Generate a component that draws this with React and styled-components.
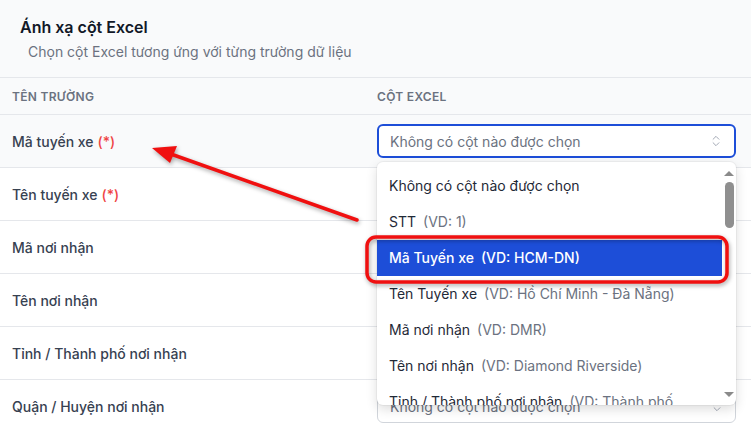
import React from 'react'
import styled, { createGlobalStyle } from 'styled-components'
import { ChevronsUpDown } from 'lucide-react'

const GlobalStyle = createGlobalStyle`
  html, body {
    margin: 0;
    padding: 0;
    background: #ffffff;
    overflow: hidden;
  }
  body {
    font-family: Inter, "Noto Sans", sans-serif;
    -webkit-font-smoothing: antialiased;
  }
  * { box-sizing: border-box; }
`

const Panel = styled.div`
  position: relative;
  width: 751px;
  height: 423px;
  overflow: hidden;
  background: #ffffff;
`

const Head = styled.div`
  background: #f9fafb;
  padding: 17px 20px 15px;
  border-bottom: 1px solid #e5e7eb;
`

const Title = styled.h3`
  margin: 0;
  font-size: 16px;
  line-height: 20px;
  font-weight: 600;
  color: #111827;
`

const Subtitle = styled.p`
  margin: 5px 0 0 8px;
  font-size: 14px;
  line-height: 20px;
  color: #6b7280;
`

const Table = styled.div`
  display: flex;
  flex-direction: column;
`

const Row = styled.div`
  display: grid;
  grid-template-columns: 365px 1fr;
  align-items: center;
  height: ${(p) => (p.$header ? '37px' : '53px')};
  border-bottom: 1px solid #e5e7eb;
  background: ${(p) => (p.$header || p.$active ? '#f9fafb' : '#ffffff')};
`

const Cell = styled.div`
  padding: ${(p) => (p.$right ? '0 15px 0 12px' : '0 12px')};
`

const HeadCell = styled(Cell)`
  font-size: 12px;
  font-weight: 600;
  letter-spacing: 0.3px;
  text-transform: uppercase;
  color: #6b7280;
`

const FieldName = styled.span`
  font-size: 14px;
  font-weight: 500;
  color: #374151;
`

const Required = styled.span`
  color: #ef4444;
  margin-left: 4px;
`

const SelectWrap = styled.div`
  position: relative;
  z-index: ${(p) => (p.$open ? 5 : 1)};
`

const SelectBox = styled.div`
  display: flex;
  align-items: center;
  justify-content: space-between;
  height: 34px;
  padding: 0 11px 0 ${(p) => (p.$focus ? '11px' : '12px')};
  background: #ffffff;
  border: ${(p) => (p.$focus ? '2px solid #1d4ed8' : '1px solid #d1d5db')};
  border-radius: 6px;
  font-size: 14px;
  color: #6b7280;
  svg {
    color: #9ca3af;
  }
`

const Dropdown = styled.div`
  position: absolute;
  top: calc(100% + 4px);
  left: 0;
  right: 0;
  height: 243px;
  overflow: hidden;
  background: #ffffff;
  border-radius: 6px;
  box-shadow: 0 4px 12px rgba(0, 0, 0, 0.14), 0 0 0 1px rgba(0, 0, 0, 0.04);
  padding: 6px 14px 0 0;
`

const Option = styled.div`
  min-height: 36px;
  padding: 8px 32px 8px 12px;
  font-size: 14px;
  line-height: 20px;
  color: ${(p) => (p.$selected ? '#ffffff' : '#1f2937')};
  background: ${(p) => (p.$selected ? '#1d4ed8' : 'transparent')};
  font-weight: ${(p) => (p.$selected ? 500 : 400)};
`

const Hint = styled.span`
  margin-left: 7px;
  color: ${(p) => (p.$selected ? '#ffffff' : '#6b7280')};
`

const ScrollTrack = styled.div`
  position: absolute;
  top: 0;
  right: 0;
  bottom: 0;
  width: 14px;
  display: flex;
  flex-direction: column;
  align-items: center;
  padding: 9px 0 8px;
`

const ArrowUp = styled.div`
  width: 0;
  height: 0;
  border-left: 5px solid transparent;
  border-right: 5px solid transparent;
  border-bottom: 5px solid #8a8a8a;
`

const ArrowDown = styled(ArrowUp)`
  border-bottom: 0;
  border-top: 5px solid #8a8a8a;
  margin-top: auto;
`

const Thumb = styled.div`
  width: 9px;
  height: 46px;
  margin-top: 6px;
  border-radius: 5px;
  background: #8f8f8f;
`

const Overlay = styled.svg`
  position: absolute;
  inset: 0;
  pointer-events: none;
  z-index: 10;
  filter: drop-shadow(1px 2px 2px rgba(0, 0, 0, 0.35));
`

const fields = [
  { name: 'Mã tuyến xe', required: true },
  { name: 'Tên tuyến xe', required: true },
  { name: 'Mã nơi nhận' },
  { name: 'Tên nơi nhận' },
  { name: 'Tỉnh / Thành phố nơi nhận' },
  { name: 'Quận / Huyện nơi nhận' },
]

const options = [
  { label: 'Không có cột nào được chọn' },
  { label: 'STT', hint: '(VD: 1)' },
  { label: 'Mã Tuyến xe', hint: '(VD: HCM-DN)', selected: true },
  { label: 'Tên Tuyến xe', hint: '(VD: Hồ Chí Minh - Đà Nẵng)' },
  { label: 'Mã nơi nhận', hint: '(VD: DMR)' },
  { label: 'Tên nơi nhận', hint: '(VD: Diamond Riverside)' },
  { label: 'Tỉnh / Thành phố nơi nhận', hint: '(VD: Thành phố Hồ Chí Minh)' },
]

function ColumnSelect({ open }) {
  return (
    <SelectWrap $open={open}>
      <SelectBox $focus={open}>
        <span>Không có cột nào được chọn</span>
        <ChevronsUpDown size={14} strokeWidth={1.6} />
      </SelectBox>
      {open && (
        <Dropdown>
          {options.map((o) => (
            <Option key={o.label} $selected={o.selected}>
              {o.label}
              {o.hint && <Hint $selected={o.selected}>{o.hint}</Hint>}
            </Option>
          ))}
          <ScrollTrack>
            <ArrowUp />
            <Thumb />
            <ArrowDown />
          </ScrollTrack>
        </Dropdown>
      )}
    </SelectWrap>
  )
}

export default function App() {
  return (
    <Panel>
      <GlobalStyle />
      <Head>
        <Title>Ánh xạ cột Excel</Title>
        <Subtitle>Chọn cột Excel tương ứng với từng trường dữ liệu</Subtitle>
      </Head>
      <Table>
        <Row $header>
          <HeadCell>Tên trường</HeadCell>
          <HeadCell $right>Cột Excel</HeadCell>
        </Row>
        {fields.map((f, i) => (
          <Row key={f.name} $active={i === 0}>
            <Cell>
              <FieldName>
                {f.name}
                {f.required && <Required>(*)</Required>}
              </FieldName>
            </Cell>
            <Cell $right>
              <ColumnSelect open={i === 0} />
            </Cell>
          </Row>
        ))}
      </Table>
      {/* callout: box round the chosen option and an arrow to its field */}
      <Overlay width="751" height="423" viewBox="0 0 751 423">
        <rect x="367" y="237" width="360" height="45" rx="9" fill="none" stroke="#f01010" strokeWidth="3.5" />
        <line x1="357" y1="220" x2="168" y2="153" stroke="#f01010" strokeWidth="3.5" strokeLinecap="round" />
        <polygon points="152,148 177,146 170,163" fill="#f01010" />
      </Overlay>
    </Panel>
  )
}
